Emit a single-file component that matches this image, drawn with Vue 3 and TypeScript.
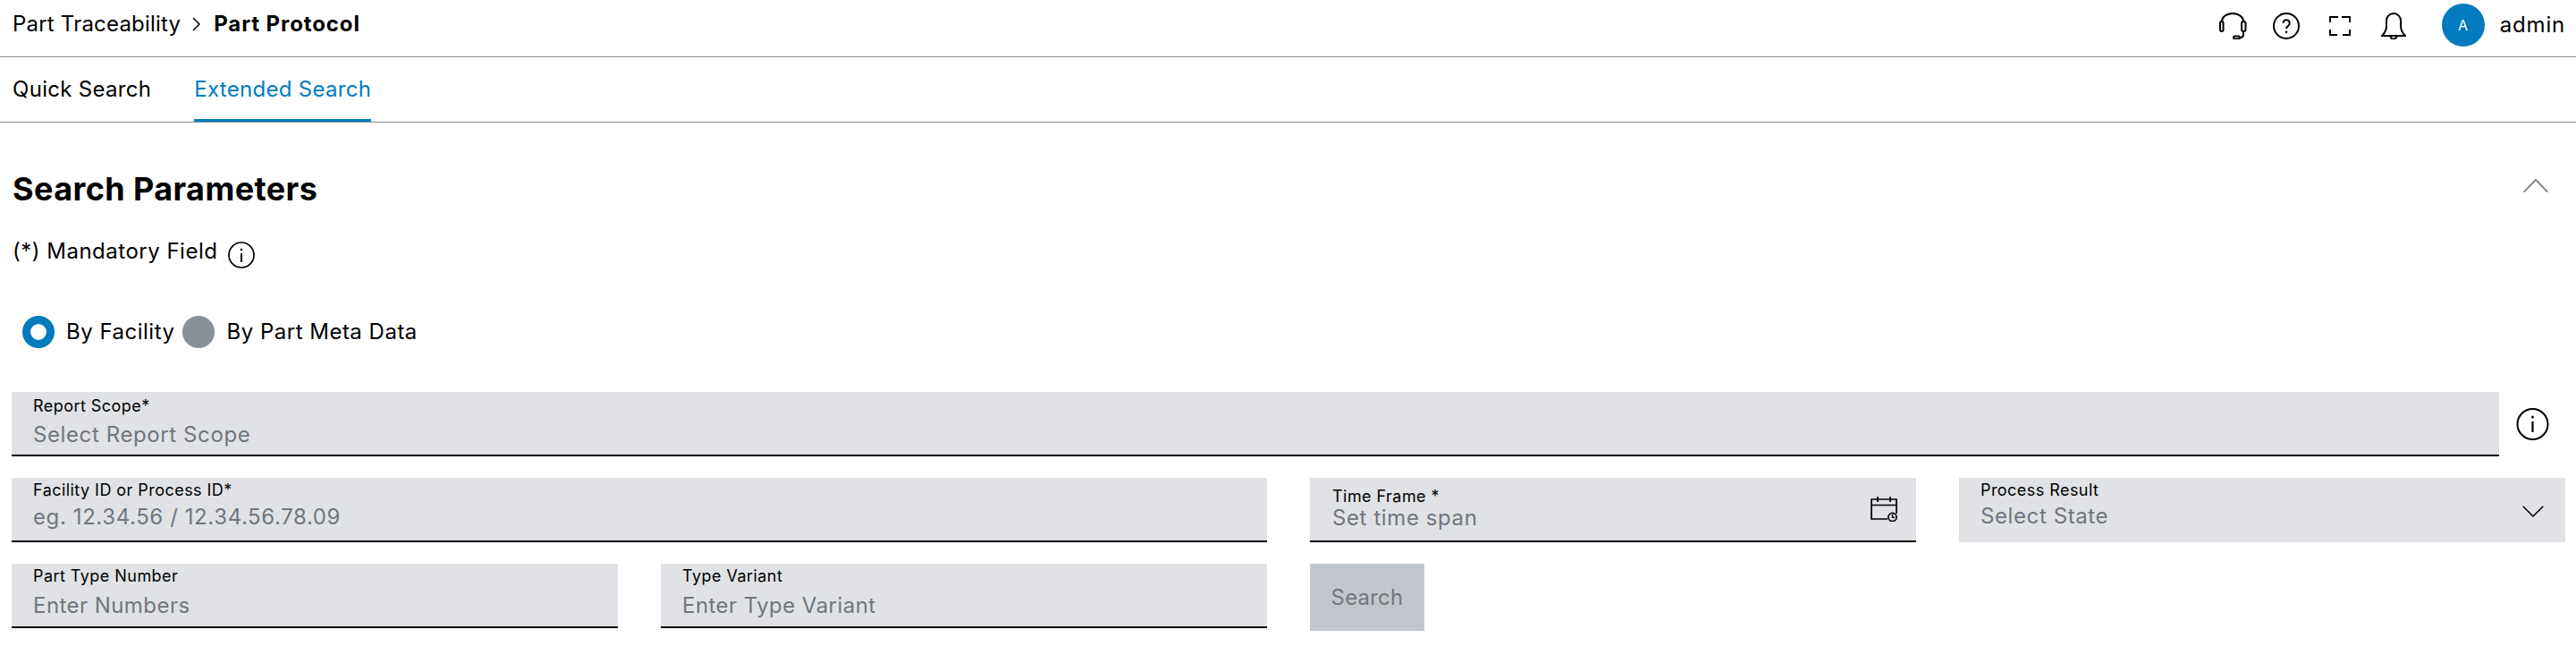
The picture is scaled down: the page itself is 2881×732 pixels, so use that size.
<script setup lang="ts">
const title: string = 'Search Parameters'
</script>

<template>
  <div class="page">
    <header class="topbar">
      <nav class="crumbs">
        <span>Part Traceability</span>
        <svg class="crumb-sep" width="9" height="16" viewBox="0 0 9 16"><path d="M1 1l7 7-7 7" fill="none" stroke="#000" stroke-width="1.5" /></svg>
        <strong>Part Protocol</strong>
      </nav>
      <div class="actions">
        <svg class="ic-head" width="31" height="30" viewBox="0 0 31 30" fill="none" stroke="#000" stroke-width="2">
          <path d="M2.750 10.500A12.250 9.500 0 0 1 27.250 10.500" />
          <rect x="1" y="10" width="3.500" height="11" rx="1.750" />
          <rect x="25" y="10" width="4.500" height="11" rx="2.250" />
          <path d="M27 21v3.500Q27 28 23 28" />
          <rect x="16" y="26.500" width="7" height="3" rx="1.500" />
        </svg>
        <svg class="ic-help" width="30" height="30" viewBox="0 0 30 30" fill="none" stroke="#000" stroke-width="2">
          <circle cx="15" cy="15" r="14" />
          <path d="M11.500 11.800a3.600 3.600 0 1 1 5.600 3c-1.400.9-2.100 1.600-2.100 3.200" />
          <circle cx="15" cy="21.800" r="1.300" fill="#000" stroke="none" />
        </svg>
        <svg class="ic-full" width="24" height="22" viewBox="0 0 24 22" fill="none" stroke="#000" stroke-width="2">
          <path d="M1 7V1h9M14 1h9v6M1 15v6h8M15 21h8v-6" />
        </svg>
        <svg class="ic-bell" width="28" height="30" viewBox="0 0 28 30" fill="none" stroke="#000" stroke-width="2">
          <path d="M1 26c3-3 5-6 5-11V9a8 8 0 0 1 16 0v6c0 5 2 8 5 11z" />
          <path d="M10.500 26.500a3.500 3 0 0 0 7 0" />
        </svg>
        <div class="avatar">A</div>
        <span class="user">admin</span>
      </div>
    </header>

    <div class="tabs">
      <a class="tab">Quick Search</a>
      <a class="tab active">Extended Search</a>
    </div>

    <main class="content">
      <div class="title-row">
        <h1>{{ title }}</h1>
        <svg class="collapse" width="28" height="15" viewBox="0 0 28 15"><path d="M.7 14.500L14 1l13.300 13.500" fill="none" stroke="#71767c" stroke-width="1.700" /></svg>
      </div>

      <div class="mandatory">
        <span>(*) Mandatory Field</span>
        <svg class="info-small" width="30" height="30" viewBox="0 0 30 30" fill="none" stroke="#000" stroke-width="1.700">
          <circle cx="15" cy="15" r="14" />
          <path d="M15 13v10" stroke-width="2" />
          <circle cx="15" cy="9" r="1.300" fill="#000" stroke="none" />
        </svg>
      </div>

      <div class="radios">
        <span class="radio on"></span>
        <span class="radio-label first">By Facility</span>
        <span class="radio off"></span>
        <span class="radio-label">By Part Meta Data</span>
      </div>

      <div class="scope-row">
        <div class="field f-scope">
          <label>Report Scope*</label>
          <div class="ph">Select Report Scope</div>
        </div>
        <svg class="info-big" width="37" height="36" viewBox="0 0 37 36" fill="none" stroke="#000" stroke-width="2">
          <circle cx="18.500" cy="18" r="17" />
          <path d="M18.500 15v12" stroke-width="2.200" />
          <circle cx="18.500" cy="10" r="1.500" fill="#000" stroke="none" />
        </svg>
      </div>

      <div class="grid">
        <div class="field span2 f-facility">
          <label>Facility ID or Process ID*</label>
          <div class="ph">eg. 12.34.56 / 12.34.56.78.09</div>
        </div>
        <div class="field f-time">
          <div class="stack">
            <label>Time Frame *</label>
            <div class="ph">Set time span</div>
          </div>
          <svg class="cal" width="30" height="28" viewBox="0 0 30 28" fill="none" stroke="#000" stroke-width="1.700">
            <path d="M19 25H1V3h28v16M1 9.500h28M8 0v6M22 0v6" />
            <circle cx="24.500" cy="23" r="4.600" />
            <path d="M24.500 20v3.200H27" stroke-width="1.400" />
          </svg>
        </div>
        <div class="field f-result">
          <label>Process Result</label>
          <div class="ph">Select State</div>
          <svg class="chev" width="24" height="13" viewBox="0 0 24 13"><path d="M.7.700L12 12 23.300.7" fill="none" stroke="#000" stroke-width="1.500" /></svg>
        </div>
        <div class="field f-part">
          <label>Part Type Number</label>
          <div class="ph">Enter Numbers</div>
        </div>
        <div class="field f-part">
          <label>Type Variant</label>
          <div class="ph">Enter Type Variant</div>
        </div>
        <div class="btn-cell"><button class="search" type="button">Search</button></div>
      </div>
    </main>
  </div>
</template>

<style scoped>
.page {
  width: 2881px;
  height: 732px;
  overflow: hidden;
  background: #fff;
  color: #000;
  font-family: Inter, "Noto Sans", "Liberation Sans", sans-serif;
  font-size: 24px;
  line-height: 32px;
  letter-spacing: 0.5px;
}
.topbar {
  display: flex;
  justify-content: space-between;
  align-items: flex-start;
  height: 64px;
  box-sizing: border-box;
  border-bottom: 1px solid #8a9097;
  padding: 0 14px;
}
.crumbs {
  display: flex;
  align-items: center;
  padding-top: 11px;
}
.crumbs span { letter-spacing: 0.2px; }
.crumb-sep { margin: 0 15px 0 13px; }
.crumbs strong { font-weight: 700; letter-spacing: 0.9px; }
.actions {
  display: flex;
  align-items: center;
  margin-top: 4px;
}
.ic-head { margin-right: 29px; margin-top: 2px; }
.ic-help { margin-right: 33px; margin-top: 2px; }
.ic-full { margin-right: 34px; margin-top: 2px; }
.ic-bell { margin-right: 40px; margin-top: 2px; }
.avatar {
  width: 48px;
  height: 48px;
  border-radius: 50%;
  background: #007bc0;
  color: #fff;
  font-size: 16px;
  line-height: 48px;
  text-align: center;
}
.user { margin-left: 17px; letter-spacing: 0.8px; margin-right: -2px; }
.tabs {
  display: flex;
  gap: 48px;
  height: 73px;
  box-sizing: border-box;
  border-bottom: 1px solid #8a9097;
  padding: 0 14px;
}
.tab {
  height: 72px;
  box-sizing: border-box;
  padding-top: 20px;
  letter-spacing: 0.3px;
}
.tab.active {
  color: #007bc0;
  border-bottom: 3px solid #007bc0;
}
.content {
  padding: 50px 12px 0 13px;
}
.title-row {
  display: flex;
  justify-content: space-between;
  align-items: flex-start;
  padding-left: 1px;
}
h1 {
  margin: 0;
  font-size: 36px;
  line-height: 48px;
  font-weight: 700;
  letter-spacing: 0.4px;
}
.collapse { margin: 13px 19px 0 0; }
.mandatory {
  display: flex;
  align-items: flex-start;
  margin-top: 30px;
  padding-left: 1px;
}
.info-small { margin: 5px 0 0 12px; }
.radios {
  display: flex;
  align-items: center;
  height: 36px;
  margin-top: 53px;
  padding-left: 12px;
}
.radio {
  width: 36px;
  height: 36px;
  box-sizing: border-box;
  border-radius: 50%;
}
.radio.on { border: 9px solid #007bc0; background: #fff; }
.radio.off { background: #8a9097; }
.radio-label { margin: 0 12px 0 13px; }
.radio-label.first { margin-right: 9px; }
.scope-row {
  display: flex;
  margin-top: 49px;
}
.field {
  position: relative;
  height: 72px;
  box-sizing: border-box;
  background: #e0e2e5;
  border-bottom: 2px solid #000;
  padding-left: 24px;
}
.field label {
  display: block;
  font-size: 18px;
  line-height: 24px;
  letter-spacing: 0.45px;
}
.ph {
  color: #71767c;
  letter-spacing: 0.6px;
}
.f-scope { width: 2782px; padding-top: 4px; }
.f-scope .ph { margin-top: 4px; }
.info-big { margin: 18px 0 0 19px; }
.grid {
  display: grid;
  grid-template-columns: repeat(4, 678px);
  column-gap: 48px;
  row-gap: 24px;
  margin-top: 24px;
}
.span2 { grid-column: span 2; }
.f-facility { padding-top: 2px; }
.f-facility .ph { margin-top: 2px; }
.f-time {
  display: flex;
  justify-content: space-between;
  padding: 10px 21px 0 25px;
}
.f-time label { line-height: 22px; }
.f-time .ph { line-height: 26px; }
.cal { margin-top: 11px; }
.f-result { border-bottom: 0; padding-top: 2px; }
.f-result .ph { margin-top: 1px; }
.chev { position: absolute; right: 24px; top: 31px; }
.f-part { padding-top: 2px; }
.f-part .ph { margin-top: 5px; letter-spacing: 0.45px; }
.btn-cell { height: 72px; }
.search {
  display: block;
  width: 128px;
  height: 75px;
  border: 0;
  padding: 0;
  background: #c1c7cc;
  color: #71767c;
  font: inherit;
  letter-spacing: 0.2px;
}
</style>
